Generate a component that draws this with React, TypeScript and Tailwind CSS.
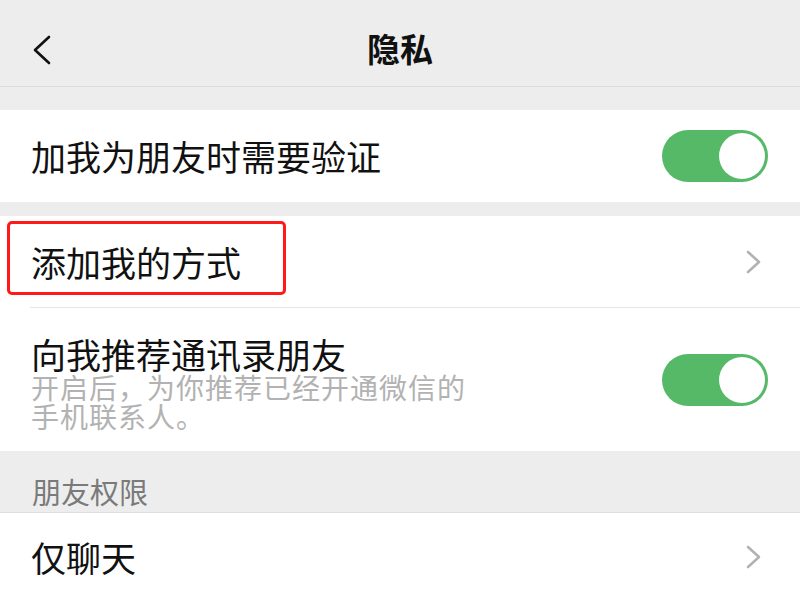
import React from "react";

const font = { fontFamily: '"Noto Sans CJK SC", "Noto Sans", sans-serif' };

function Toggle() {
  return (
    <div className="relative w-[106px] h-[52px] rounded-full bg-[#55b968]">
      <div className="absolute right-[3px] top-[3px] w-[46px] h-[46px] rounded-full bg-white" />
    </div>
  );
}

function Chevron() {
  return (
    <svg width="18" height="24" viewBox="0 0 18 24" fill="none">
      <path d="M3 2 L14 12 L3 22" stroke="#b2b2b2" strokeWidth="2.6" strokeLinecap="round" strokeLinejoin="round" />
    </svg>
  );
}

export default function App() {
  return (
    <div className="w-[800px] h-[600px] overflow-hidden bg-[#ededed] text-[#111]" style={font}>
      <div className="h-[87px] border-b border-[#dcdcdc] flex items-center relative">
        <div className="absolute left-[30px] top-[35px]">
          <svg width="24" height="30" viewBox="0 0 24 30" fill="none">
            <path d="M19 2 L5 15 L19 28" stroke="#111" strokeWidth="2.6" strokeLinecap="round" strokeLinejoin="round" />
          </svg>
        </div>
        <div className="flex-1 text-center pt-[10px] text-[33px] font-bold leading-[40px]">隐私</div>
      </div>
      <div className="h-[23px]" />
      <div className="h-[92px] bg-white flex items-center justify-between pl-[31px] pr-[32px]">
        <span className="text-[35px] leading-[44px]">加我为朋友时需要验证</span>
        <Toggle />
      </div>
      <div className="h-[14px]" />
      <div className="bg-white">
        <div className="h-[91px] flex items-center justify-between pl-[31px] pr-[37px] relative">
          <div className="absolute left-[7px] top-[5px] w-[279px] h-[74px] border-[3px] border-[#ff1a1a] rounded-[5px]" />
          <span className="text-[35px] leading-[44px]">添加我的方式</span>
          <Chevron />
        </div>
        <div className="ml-[30px] h-px bg-[#e5e5e5]" />
        <div className="h-[143px] flex items-center justify-between pl-[31px] pr-[32px]">
          <div className="flex flex-col pt-[6px]">
            <span className="text-[35px] leading-[38px]">向我推荐通讯录朋友</span>
            <span className="text-[28px] leading-[29px] tracking-[1px] text-[#b2b2b2]">
              开启后，为你推荐已经开通微信的
              <br />
              手机联系人。
            </span>
          </div>
          <Toggle />
        </div>
      </div>
      <div className="h-[62px] border-b border-[#dedede] pl-[32px] pt-[22px]">
        <span className="text-[29px] leading-[36px] text-[#7a7a7a]">朋友权限</span>
      </div>
      <div className="h-[88px] bg-white flex items-center justify-between pl-[31px] pr-[37px]">
        <span className="text-[35px] leading-[44px]">仅聊天</span>
        <Chevron />
      </div>
    </div>
  );
}
